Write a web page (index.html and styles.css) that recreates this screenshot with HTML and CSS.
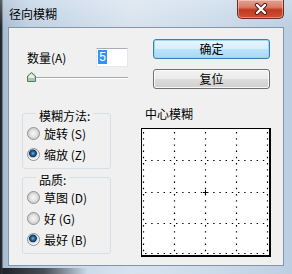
FILE: index.html
```html
<!DOCTYPE html>
<html lang="zh-CN">

<head>
    <meta charset="UTF-8">
    <meta name="viewport" content="width=device-width, initial-scale=1.0">
    <title>径向模糊</title>
    <link rel="stylesheet" href="styles.css">
</head>

<body>
    <div class="window">
        <div class="titlebar">
            <span class="title">径向模糊</span>
            <div class="close">
                <svg width="16" height="12" viewBox="0 0 16 12">
                    <path d="M4 2 L12 10 M12 2 L4 10" stroke="#4a1a14" stroke-width="4.2" stroke-linecap="round" />
                    <path d="M4 2 L12 10 M12 2 L4 10" stroke="#ffffff" stroke-width="2.4" stroke-linecap="round" />
                </svg>
            </div>
        </div>

        <div class="client">
            <div class="left-col">
                <div class="amount">
                    <label>数量(A)</label>
                    <div class="num-input"><span class="sel">5</span></div>
                </div>
                <div class="slider">
                    <svg width="101" height="11" viewBox="0 0 101 11">
                        <line x1="0" y1="5.5" x2="101" y2="5.5" stroke="#a6a6a6" />
                        <line x1="0" y1="6.5" x2="101" y2="6.5" stroke="#ffffff" />
                        <path d="M4.5 0.5 L8.5 4 L8.5 9.5 L0.5 9.5 L0.5 4 Z" fill="#a9c7ae" stroke="#557a62" />
                        <path d="M4.5 1.8 L7.3 4.3 L7.3 6 L1.7 6 L1.7 4.3 Z" fill="#e4f1e5" />
                    </svg>
                </div>

                <div class="group method">
                    <span class="legend">模糊方法:</span>
                    <div class="option"><span class="radio"></span>旋转 (S)</div>
                    <div class="option"><span class="radio checked"></span>缩放 (Z)</div>
                </div>

                <div class="group quality">
                    <span class="legend">品质:</span>
                    <div class="option"><span class="radio"></span>草图 (D)</div>
                    <div class="option"><span class="radio"></span>好 (G)</div>
                    <div class="option"><span class="radio checked"></span>最好 (B)</div>
                </div>
            </div>

            <div class="right-col">
                <button class="btn default">确定</button>
                <button class="btn">复位</button>
                <div class="preview-label">中心模糊</div>
                <div class="preview">
                    <svg width="127" height="126" viewBox="0 0 127 126">
                        <g stroke="#000" stroke-width="1.2" stroke-dasharray="1.4 4.8">
                            <line x1="1.5" y1="3" x2="1.5" y2="126" />
                            <line x1="32.5" y1="3" x2="32.5" y2="126" />
                            <line x1="63.5" y1="3" x2="63.5" y2="126" />
                            <line x1="94.5" y1="3" x2="94.5" y2="126" />
                            <line x1="125.5" y1="3" x2="125.5" y2="126" />
                            <line x1="3" y1="31.5" x2="127" y2="31.5" />
                            <line x1="3" y1="63.5" x2="127" y2="63.5" />
                            <line x1="3" y1="94.5" x2="127" y2="94.5" />
                            <line x1="3" y1="124.5" x2="127" y2="124.5" />
                        </g>
                        <path d="M61 63.5 H66 M63.5 61 V66" stroke="#000" stroke-width="1" />
                    </svg>
                </div>
            </div>
        </div>
    </div>
</body>

</html>
```

FILE: styles.css
```css
* {
    margin: 0;
    padding: 0;
    box-sizing: border-box;
}

body {
    width: 292px;
    height: 274px;
    overflow: hidden;
    font-family: "Noto Sans CJK SC", "Noto Sans", sans-serif;
    font-size: 12px;
    color: #000;
    background: #c4d5e6;
}

.window {
    width: 292px;
    height: 274px;
    display: flex;
    flex-direction: column;
    background:
        linear-gradient(90deg, #1d2024 0, #30363d 2px, transparent 3px),
        linear-gradient(90deg, rgba(22, 24, 28, 0.95) 0, rgba(40, 44, 50, 0.8) 15%, rgba(40, 44, 50, 0) 30%) 0 268px / 100% 6px no-repeat,
        linear-gradient(90deg, #a9bdd2 3px, #bfd1e3 10%, #d7e3ef 45%, #cddcea 70%, #bccfe2 100%);
}

.titlebar {
    height: 27px;
    display: flex;
    justify-content: space-between;
    align-items: flex-start;
    background: linear-gradient(180deg, rgba(255, 255, 255, 0.25), rgba(255, 255, 255, 0));
}

.title {
    padding: 6px 0 0 9px;
    line-height: 16px;
    font-size: 12px;
}

.close {
    width: 47px;
    height: 19px;
    margin-right: 8px;
    border: 1px solid #6e2c22;
    border-top: none;
    border-radius: 0 0 5px 5px;
    background: linear-gradient(180deg, #e6a192 0, #d87c67 40%, #c2381f 55%, #cc5236 100%);
    box-shadow: inset 0 0 0 1px rgba(255, 255, 255, 0.35);
    display: flex;
    align-items: center;
    justify-content: center;
}

.client {
    flex: none;
    height: 239px;
    margin: 0 8px;
    border: 1px solid #8396aa;
    background: #f0f0f0;
    display: flex;
}

/* left column */

.left-col {
    width: 106px;
    margin-left: 13px;
    padding-top: 20px;
}

.amount {
    display: flex;
    justify-content: space-between;
    align-items: center;
    height: 19px;
}

.amount label {
    margin-left: 5px;
    line-height: 14px;
}

.num-input {
    width: 32px;
    height: 19px;
    border: 1px solid #e3e9ef;
    border-top-color: #abadb3;
    background: #fff;
    padding: 1px 0 0 1px;
}

.num-input .sel {
    display: block;
    width: 9px;
    height: 14px;
    background: #3390ff;
    color: #fff;
    font-family: "Liberation Sans", sans-serif;
    line-height: 14px;
    text-align: center;
}

.slider {
    margin: 5px 0 0 5px;
    width: 101px;
    height: 11px;
}

.slider svg {
    display: block;
}

.group {
    width: 89px;
    border: 1px solid #d5dfe5;
    border-radius: 3px;
    padding: 0 0 3px 4px;
}

.method {
    margin-top: 30px;
}

.quality {
    margin-top: 8px;
}

.legend {
    display: block;
    width: fit-content;
    background: #f0f0f0;
    line-height: 12px;
    margin: -4px 0 1px 9px;
    padding: 0 3px;
}

.option {
    display: flex;
    align-items: center;
    gap: 4px;
    height: 21px;
}

.radio {
    flex: none;
    width: 13px;
    height: 13px;
    border-radius: 50%;
    border: 1px solid #8e8f8f;
    background: radial-gradient(circle at 50% 50%, #f6f6f6 0, #e6e6e6 3px, #cfcfcf 5px, #f4f4f4 6px);
}

.radio.checked {
    background: radial-gradient(circle at 45% 40%, #6fc3ee 0, #2a74ad 1.5px, #0f3157 3.5px, #c6d0d9 4.2px, #e8e8e8 5px, #fbfbfb 6px);
}

/* right column */

.right-col {
    width: 130px;
    margin-left: 13px;
    padding-top: 11px;
    display: flex;
    flex-direction: column;
}

.btn {
    display: block;
    width: 117px;
    height: 20px;
    margin-left: 12px;
    border: 1px solid #707070;
    border-radius: 3px;
    background: linear-gradient(180deg, #f2f2f2 0, #ebebeb 50%, #dddddd 50%, #cfcfcf 100%);
    box-shadow: inset 0 0 0 1px rgba(255, 255, 255, 0.8);
    font: inherit;
    line-height: 16px;
    color: #000;
}

.btn.default {
    border-color: #3c7fb1;
    background: linear-gradient(180deg, #e8f6fd 0, #d5eefc 50%, #bde5fb 50%, #a8d8f4 100%);
    box-shadow: inset 0 0 0 1px #9bd6f4;
}

.btn + .btn {
    margin-top: 10px;
}

.preview-label {
    margin: 18px 0 0 4px;
    line-height: 14px;
}

.preview {
    margin-top: 7px;
    width: 130px;
    height: 129px;
    border: solid #000;
    border-width: 1px 2px 2px 1px;
    background: #fff;
}

.preview svg {
    display: block;
}
```
